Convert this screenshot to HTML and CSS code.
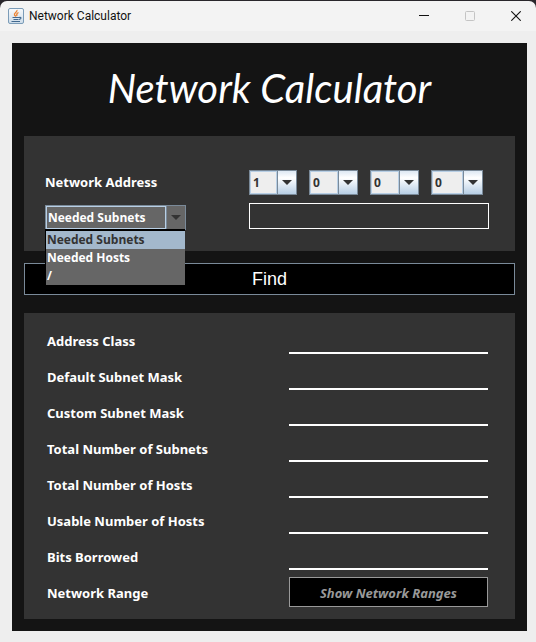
FILE: index.html
```html
<!DOCTYPE html>
<html lang="en">
<head>
<meta charset="utf-8">
<title>Network Calculator</title>
<link rel="stylesheet" href="styles.css">
</head>
<body>
<div class="window">
  <header class="titlebar">
    <svg class="app-icon" viewBox="0 0 16 16" aria-hidden="true">
      <defs><linearGradient id="tile" x1="0" y1="0" x2="0" y2="1"><stop offset="0" stop-color="#f8fafc"/><stop offset="1" stop-color="#cddce9"/></linearGradient></defs>
      <rect x=".5" y=".5" width="15" height="15" rx="1.5" fill="url(#tile)" stroke="#7b9cb8"/>
      <path d="M9 2C9.500 4 5.500 5 6.500 7L8 8.500M10.500 4.500C8 5.500 8.500 6.500 9 8" fill="none" stroke="#ec8434" stroke-width="1.300"/>
      <path d="M4.500 9.500h6.500M5.500 11.500h5M3.500 13.500h8.500M11 9.500c3-.8 2.500 1.500 0 2" fill="none" stroke="#42698f" stroke-width="1.100"/>
    </svg>
    <span class="window-title">Network Calculator</span>
    <button class="control" type="button" aria-label="Minimize"><svg viewBox="0 0 10 10"><path d="M0 4.500h10" stroke="#111"/></svg></button>
    <button class="control" type="button" aria-label="Maximize" disabled><svg viewBox="0 0 10 10"><rect x=".5" y=".5" width="9" height="9" rx="1" fill="none" stroke="#c4c4c4"/></svg></button>
    <button class="control" type="button" aria-label="Close"><svg viewBox="0 0 10 10"><path d="M.3.3l9.400 9.400M9.700.3L.3 9.700" stroke="#111" stroke-width="1.100"/></svg></button>
  </header>
  <main class="frame">
    <form class="panel">
      <h1>Network Calculator</h1>
      <section class="card address">
        <label class="name" for="octet1">Network Address</label>
        <div class="octets">
          <div class="combo octet"><select id="octet1"><option>1</option></select><span class="arrow"><svg viewBox="0 0 10 5"><path d="M0 0h10L5 5z"/></svg></span></div>
          <div class="combo octet"><select aria-label="Second octet"><option>0</option></select><span class="arrow"><svg viewBox="0 0 10 5"><path d="M0 0h10L5 5z"/></svg></span></div>
          <div class="combo octet"><select aria-label="Third octet"><option>0</option></select><span class="arrow"><svg viewBox="0 0 10 5"><path d="M0 0h10L5 5z"/></svg></span></div>
          <div class="combo octet"><select aria-label="Fourth octet"><option>0</option></select><span class="arrow"><svg viewBox="0 0 10 5"><path d="M0 0h10L5 5z"/></svg></span></div>
        </div>
        <div class="combo mode">
          <select aria-label="Requirement"><option>Needed Subnets</option><option>Needed Hosts</option><option>/</option></select><span class="arrow"><svg viewBox="0 0 10 5"><path d="M0 0h10L5 5z"/></svg></span>
          <ul class="menu" role="listbox">
            <li role="option" aria-selected="true">Needed Subnets</li>
            <li role="option">Needed Hosts</li>
            <li role="option">/</li>
          </ul>
        </div>
        <input class="amount" type="text" aria-label="Amount">
      </section>
      <button class="find" type="button">Find</button>
      <section class="card results">
        <label class="name" for="class">Address Class</label><input id="class" class="result" readonly>
        <label class="name" for="default-mask">Default Subnet Mask</label><input id="default-mask" class="result" readonly>
        <label class="name" for="custom-mask">Custom Subnet Mask</label><input id="custom-mask" class="result" readonly>
        <label class="name" for="subnets">Total Number of Subnets</label><input id="subnets" class="result" readonly>
        <label class="name" for="hosts">Total Number of Hosts</label><input id="hosts" class="result" readonly>
        <label class="name" for="usable">Usable Number of Hosts</label><input id="usable" class="result" readonly>
        <label class="name" for="bits">Bits Borrowed</label><input id="bits" class="result" readonly>
        <label class="name" for="ranges">Network Range</label><button id="ranges" class="ranges" type="button">Show Network Ranges</button>
      </section>
    </form>
  </main>
</div>
</body>
</html>
```
FILE: styles.css
```css
* { box-sizing: border-box; }

body {
  margin: 0;
  background: #29262b;
  font-family: "Noto Sans", "Open Sans", sans-serif;
}

button, input, select { font-family: inherit; margin: 0; }

.window {
  min-height: 100vh;
  border-top: 1px solid #29262b;
}

.titlebar {
  display: flex;
  align-items: center;
  height: 30px;
  padding-left: 8px;
  background: #f3f3f3;
  border-radius: 7px 7px 0 0;
}

.app-icon { width: 16px; height: 16px; }

.window-title {
  flex: 1;
  margin-left: 5px;
  font-family: Roboto, sans-serif;
  font-size: 12px;
  color: #111;
}

.control {
  display: flex;
  align-items: center;
  justify-content: center;
  width: 46px;
  height: 30px;
  padding: 0;
  border: 0;
  background: none;
}

.control:last-child { width: 43px; padding-left: 3px; }
.control svg { width: 10px; height: 10px; }

.frame {
  padding: 12px 9px 11px 12px;
  background: #eee;
}

.panel {
  padding: 12px;
  background: #141414;
}

h1 {
  margin: 0 0 15px;
  font-family: Lato, sans-serif;
  font-size: 40px;
  font-style: italic;
  font-weight: 400;
  line-height: 66px;
  text-align: center;
  color: #fff;
}

.card { background: #333; }

.address {
  display: grid;
  grid-template-columns: 204px 1fr;
  row-gap: 8px;
  padding: 34px 26px 21px 21px;
}

.name {
  align-self: center;
  font-size: 13px;
  font-weight: 700;
  line-height: 20px;
  color: #fff;
}

.address .name { padding-bottom: 2px; }
.results .name { padding-top: 2px; }

.octets { display: flex; gap: 12px; }

.combo {
  position: relative;
  display: flex;
  height: 25px;
  border: 1px solid #7a8a99;
}

.octet { width: 49px; }
.octet:first-child { width: 48px; }
.octet:last-child { width: 52px; }

.combo select {
  appearance: none;
  flex: 1;
  min-width: 0;
  padding: 0 0 0 2px;
  border: 1px solid #b8cfe5;
  border-radius: 0;
  outline: 0;
  background: #eee;
  font-family: "Open Sans", sans-serif;
  font-size: 12px;
  font-weight: 700;
  color: #333;
}

.arrow {
  display: flex;
  align-items: center;
  justify-content: center;
  width: 19px;
  border-left: 1px solid #7a8a99;
  background: linear-gradient(#dde8f3, #fff 30%, #b8cfe5);
  pointer-events: none;
}

.arrow svg { width: 10px; height: 5px; fill: #333; }

.mode { width: 141px; margin-top: 2px; }
.combo.mode select { padding-left: 1px; background: #666; color: #fff; }
.mode .arrow { background: #666; }

.menu {
  position: absolute;
  top: 100%;
  left: -1px;
  right: 0;
  z-index: 1;
  margin: 0;
  padding: 0;
  border: solid #000;
  border-width: 2px 0 0 1px;
  background: #666;
  list-style: none;
  font-family: "Open Sans", sans-serif;
  font-size: 12px;
  font-weight: 700;
  line-height: 18px;
  color: #fff;
}

.menu li { padding-left: 1px; }
.menu li[aria-selected] { background: #a3b8cc; color: #333; }

.amount {
  width: 100%;
  height: 26px;
  padding: 0 4px;
  border: 1px solid #fff;
  background: #333;
  color: #fff;
}

.find {
  display: block;
  width: 100%;
  height: 32px;
  margin: 12px 0 18px;
  padding: 0;
  border: 1px solid #7a8a99;
  background: #000;
  font-family: "Liberation Sans", sans-serif;
  font-size: 18px;
  color: #fff;
}

.results {
  display: grid;
  grid-template-columns: 1fr 199px;
  grid-auto-rows: 30px;
  column-gap: 8px;
  row-gap: 6px;
  padding: 12px 27px 12px 23px;
}

.result {
  width: 100%;
  height: 29px;
  padding: 0 4px;
  border: 0;
  border-bottom: 2px solid #fff;
  outline: 0;
  background: none;
  color: #fff;
}

.ranges {
  padding: 2px 0 0;
  border: 1px solid #999;
  background: #000;
  font-size: 13px;
  font-style: italic;
  font-weight: 700;
  color: #999;
}
```
